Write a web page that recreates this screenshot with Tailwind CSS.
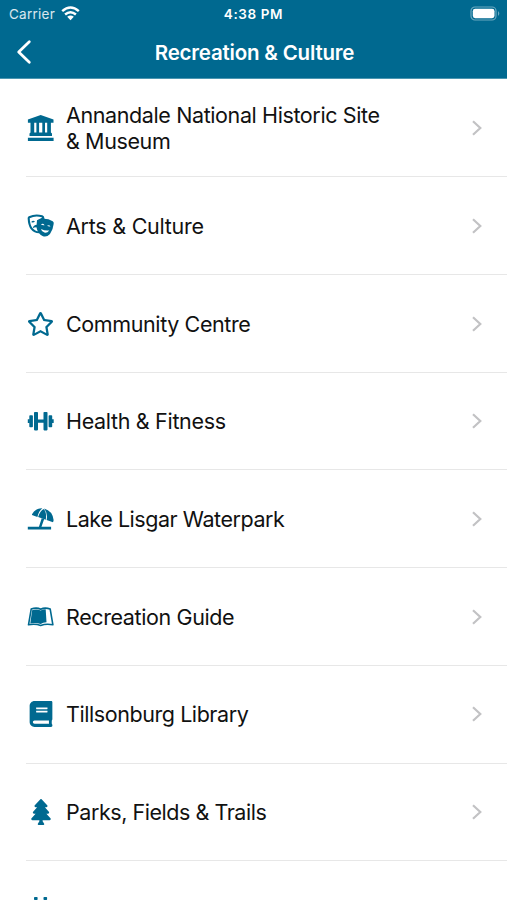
<!DOCTYPE html>
<html lang="en">
<head>
<meta charset="utf-8">
<title>Recreation &amp; Culture</title>
<script src="https://cdn.jsdelivr.net/npm/@tailwindcss/browser@4"></script>
</head>
<body class="w-[507px] h-[900px] overflow-hidden bg-white font-['Inter','Liberation_Sans',sans-serif] text-[#111]">
<header class="h-[79px] bg-[#006990] text-white border-b border-[#4b96b1]">
  <div class="grid grid-cols-3 items-center h-[27px] pl-[9px] pr-[6px] text-[13px]">
    <div class="flex items-center gap-[6px] text-white/85"><span class="pt-px text-[13.5px] tracking-[0.25px]">Carrier</span>
      <svg class="w-[19px] h-[15px] text-white" viewBox="0 0 19 15" fill="none" stroke="currentColor" stroke-width="2.5"><path d="M1.2 5.1Q9.5-2 17.8 5.1M4.1 8.5Q9.5 3.9 14.9 8.5"/><path d="M6.2 10.8Q9.5 8 12.8 10.8L9.5 14.2Z" fill="currentColor" stroke="none"/></svg>
    </div>
    <div class="text-center font-semibold text-[13.5px] tracking-[0.6px] pt-px -ml-[3px]">4:38 PM</div>
    <div class="flex justify-end"><svg class="w-[31px] h-[15px]" viewBox="0 0 31 15"><rect x="1" y="1" width="25" height="13" rx="4" fill="none" stroke="#6ba9c0" stroke-width="1.2"/><rect x="2.8" y="2.8" width="21.7" height="9.4" rx="2.4" fill="white"/><path d="M28 5q2.6 2.5 0 5z" fill="#6ba9c0"/></svg></div>
  </div>
  <div class="grid grid-cols-[60px_1fr_60px] items-center h-[50px]">
    <svg class="ml-[16px] w-[16px] h-[26px]" viewBox="0 0 16 26" fill="none" stroke="white" stroke-width="2.8" stroke-linecap="round" stroke-linejoin="round"><path d="M13.3 2.8L2.7 13l10.6 10.2"/></svg>
    <h1 class="pt-[2px] pl-[2px] text-center text-[20.5px] font-semibold tracking-[-0.2px] whitespace-nowrap">Recreation &amp; Culture</h1>
  </div>
</header>
<main class="pt-[0.3px] text-[21.5px] leading-[26px] tracking-[-0.39px] text-[#006990]">
  <div class="ml-[26px] h-[97.75px] pt-[1px] pr-[23px] border-b border-[#e7e7e7] flex items-center">
    <svg class="ml-px w-[28px] h-[28px] shrink-0" viewBox="0 0 28 28" fill="currentColor"><path d="M13.7 1L26.5 5.6V8.8H.9V5.6ZM3.5 8.8H7.2V18.5H9.4V8.8H12.1V18.5H15.3V8.8H18V18.5H20.2V8.8H23.9V18.5L25 19.4V22H2.5V19.4L3.5 18.5ZM.9 23.8h25.7v3.1H.9Z"/></svg>
    <p class="ml-[11px] flex-1 text-[#111]">Annandale National Historic Site<br>&amp; Museum</p>
    <svg class="w-[15px] h-[20px]" viewBox="0 0 15 20" fill="none" stroke="#c2c2c4" stroke-width="2.2"><path d="M4 3.2l7.3 6.8L4 16.8"/></svg>
  </div>
  <div class="ml-[26px] h-[97.75px] pt-[2px] pr-[23px] border-b border-[#e7e7e7] flex items-center">
    <svg class="ml-px w-[28px] h-[28px] shrink-0" viewBox="0 0 28 28"><path d="M2.2 5.2Q8.5 2.2 15 4.3Q16.2 4.8 16.4 6.3L11 9 10.5 15Q11 18 12.6 20.3Q8 20.6 4.4 16.3Q2 13 1.7 6.5Q1.6 5.5 2.2 5.2Z" fill="white" stroke="currentColor" stroke-width="2.1"/><path d="M4.2 9.9Q6 7.6 8 9.5Q6.2 11.2 4.2 9.9M5.6 16.3Q6.5 13.2 10 12.8V15.2Q7.3 15 5.6 16.3" fill="currentColor"/><path d="M12.9 7.2Q19.8 5.8 25.7 9.2Q27 10 26.7 11.7Q26 18 23 22Q19.5 25.7 15.5 24Q10.9 21.7 10.7 16.2Q10.5 11.7 11.2 8.9Q11.6 7.5 12.9 7.2Z" fill="currentColor"/><path d="M13.9 12.6Q15.8 10.6 17.6 13.2Q15.8 13.6 13.9 12.6M20 13.8Q22.1 12.2 23.5 14.5Q21.6 14.9 20 13.8M14 17Q18 18.9 22.3 18.4Q20.3 21.2 17.4 20.6Q14.6 20 14 17" fill="white"/></svg>
    <p class="ml-[11px] flex-1 text-[#111] tracking-[-0.25px]">Arts &amp; Culture</p>
    <svg class="w-[15px] h-[20px]" viewBox="0 0 15 20" fill="none" stroke="#c2c2c4" stroke-width="2.2"><path d="M4 3.2l7.3 6.8L4 16.8"/></svg>
  </div>
  <div class="ml-[26px] h-[97.75px] pt-[1.2px] pr-[23px] border-b border-[#e7e7e7] flex items-center">
    <svg class="ml-px w-[27px] h-[24px] mr-px shrink-0" viewBox="0 0 576 512" fill="currentColor"><path d="M528.1 171.5L382 150.2 316.7 17.8c-11.7-23.6-45.6-23.9-57.4 0L194 150.2 47.9 171.5c-26.2 3.8-36.7 36.1-17.7 54.6l105.7 103-25 145.5c-4.5 26.3 23.2 46 46.4 33.7L288 439.6l130.7 68.7c23.2 12.2 50.9-7.4 46.4-33.7l-25-145.5 105.7-103c19-18.5 8.5-50.8-17.7-54.6zM388.6 312.3l23.7 138.4L288 385.4l-124.3 65.3 23.7-138.4-100.6-98 139-20.2 62.2-126 62.2 126 139 20.2-100.6 98z"/></svg>
    <p class="ml-[11px] flex-1 text-[#111]">Community Centre</p>
    <svg class="w-[15px] h-[20px]" viewBox="0 0 15 20" fill="none" stroke="#c2c2c4" stroke-width="2.2"><path d="M4 3.2l7.3 6.8L4 16.8"/></svg>
  </div>
  <div class="ml-[26px] h-[97.75px] pt-[1px] pr-[23px] border-b border-[#e7e7e7] flex items-center">
    <svg class="ml-px w-[28px] h-[28px] shrink-0" viewBox="0 0 28 28" fill="currentColor"><rect x="2.3" y="8.2" width="3.6" height="12" rx=".8"/><rect x="7" y="5" width="4" height="18.4" rx=".8"/><rect x="16.5" y="5" width="4" height="18.4" rx=".8"/><rect x="21.6" y="8.2" width="3.6" height="12" rx=".8"/><path d="M10 12.6h7.5v3.2H10zM.8 12.3h2v3.8h-2zM24.7 12.3h2v3.8h-2z"/></svg>
    <p class="ml-[11px] flex-1 text-[#111] tracking-[-0.32px]">Health &amp; Fitness</p>
    <svg class="w-[15px] h-[20px]" viewBox="0 0 15 20" fill="none" stroke="#c2c2c4" stroke-width="2.2"><path d="M4 3.2l7.3 6.8L4 16.8"/></svg>
  </div>
  <div class="ml-[26px] h-[97.75px] pt-[1px] pr-[23px] border-b border-[#e7e7e7] flex items-center">
    <svg class="ml-px w-[28px] h-[28px] shrink-0" viewBox="0 0 28 28" fill="currentColor"><path d="M5 9.2Q9 2.8 15.4 3.3Q12 5.6 10.4 11.9L5.6 10.2Q4.8 9.9 5 9.2ZM11.1 12.1Q13 5.8 16.6 4Q19.8 6.5 18.8 14.8ZM17.1 3.5Q25.7 6 26.6 15.1Q26.6 17.6 25.3 17.1L19.6 15.1Q21 8 17.1 3.5Z"/><path d="M14.7 13.2l2.5.9-3 8.4h-2.5zM.8 21.7h23.3v2.7H.8z"/></svg>
    <p class="ml-[11px] flex-1 text-[#111] tracking-[-0.45px]">Lake Lisgar Waterpark</p>
    <svg class="w-[15px] h-[20px]" viewBox="0 0 15 20" fill="none" stroke="#c2c2c4" stroke-width="2.2"><path d="M4 3.2l7.3 6.8L4 16.8"/></svg>
  </div>
  <div class="ml-[26px] h-[97.75px] pt-[2px] pr-[23px] border-b border-[#e7e7e7] flex items-center">
    <svg class="ml-px w-[28px] h-[28px] shrink-0" viewBox="0 0 28 28"><path d="M4.2 6.1Q9.5 4 13.7 6.2Q18 4 23.2 6.1L25.9 21.8Q19 20.6 13.7 22.4Q8.2 20.6 1.5 21.8Z" fill="white" stroke="currentColor" stroke-width="1.6" stroke-linejoin="round"/><path d="M5.1 7.2Q10 5.6 13.7 7.6Q16 6.2 18.7 6.3L19.5 19.3Q16 19.4 13.7 21.1Q9 19.3 3.3 20.4Z" fill="currentColor"/></svg>
    <p class="ml-[11px] flex-1 text-[#111]">Recreation Guide</p>
    <svg class="w-[15px] h-[20px]" viewBox="0 0 15 20" fill="none" stroke="#c2c2c4" stroke-width="2.2"><path d="M4 3.2l7.3 6.8L4 16.8"/></svg>
  </div>
  <div class="ml-[26px] h-[97.75px] pt-[0.2px] pr-[23px] border-b border-[#e7e7e7] flex items-center">
    <svg class="ml-px w-[28px] h-[26px] shrink-0" viewBox="-52 0 552 512" fill="currentColor"><path d="M448 360V24c0-13.3-10.7-24-24-24H96C43 0 0 43 0 96v320c0 53 43 96 96 96h328c13.3 0 24-10.7 24-24v-16c0-7.5-3.5-14.3-8.9-18.7-4.2-15.4-4.2-59.3 0-74.7 5.4-4.3 8.9-11.1 8.9-18.6zM128 134c0-3.3 2.7-6 6-6h212c3.3 0 6 2.7 6 6v20c0 3.3-2.7 6-6 6H134c-3.3 0-6-2.7-6-6v-20zm0 64c0-3.3 2.7-6 6-6h212c3.3 0 6 2.7 6 6v20c0 3.3-2.7 6-6 6H134c-3.3 0-6-2.7-6-6v-20zm253.4 250H96c-17.7 0-32-14.3-32-32 0-17.6 14.4-32 32-32h285.4c-1.9 17.1-1.9 46.9 0 64z"/></svg>
    <p class="ml-[11px] flex-1 text-[#111] tracking-[-0.43px]">Tillsonburg Library</p>
    <svg class="w-[15px] h-[20px]" viewBox="0 0 15 20" fill="none" stroke="#c2c2c4" stroke-width="2.2"><path d="M4 3.2l7.3 6.8L4 16.8"/></svg>
  </div>
  <div class="ml-[26px] h-[97.75px] pt-[1px] pr-[23px] border-b border-[#e7e7e7] flex items-center">
    <svg class="ml-px w-[28px] h-[26px] shrink-0" viewBox="0 0 384 512" fill="currentColor"><path d="M378.31 378.49L298.42 288h30.63c9.01 0 16.98-5 20.78-13.06 3.8-8.04 2.55-17.26-3.28-24.05L268.42 160h28.89c9.1 0 17.3-5.35 20.86-13.61 3.52-8.13 1.86-17.59-4.24-24.08L203.66 4.83c-6.03-6.45-17.28-6.45-23.32 0L70.06 122.31c-6.1 6.49-7.75 15.95-4.24 24.08C69.38 154.65 77.59 160 86.69 160h28.89l-78.14 90.91c-5.81 6.78-7.06 15.99-3.27 24.04C37.97 283 45.93 288 54.95 288h30.63L5.69 378.49c-6 6.79-7.36 16.09-3.56 24.26 3.75 8.05 12 13.25 21.01 13.25H160v24.45l-30.29 48.4c-5.32 10.64 2.42 23.16 14.31 23.16h95.96c11.89 0 19.63-12.52 14.31-23.16L224 440.45V416h136.86c9.01 0 17.26-5.2 21.01-13.25 3.8-8.17 2.44-17.47-3.56-24.26z"/></svg>
    <p class="ml-[11px] flex-1 text-[#111] tracking-[-0.45px]">Parks, Fields &amp; Trails</p>
    <svg class="w-[15px] h-[20px]" viewBox="0 0 15 20" fill="none" stroke="#c2c2c4" stroke-width="2.2"><path d="M4 3.2l7.3 6.8L4 16.8"/></svg>
  </div>
  <div class="ml-[26px] h-[38.5px] pt-[36px] overflow-hidden">
    <svg class="ml-px w-[28px] h-[3px]" viewBox="0 0 28 3" fill="currentColor"><rect x="7" y="0" width="3.6" height="3" rx=".7"/><rect x="16.5" y="0" width="3.6" height="3" rx=".7"/></svg>
  </div>
</main>
</body>
</html>
